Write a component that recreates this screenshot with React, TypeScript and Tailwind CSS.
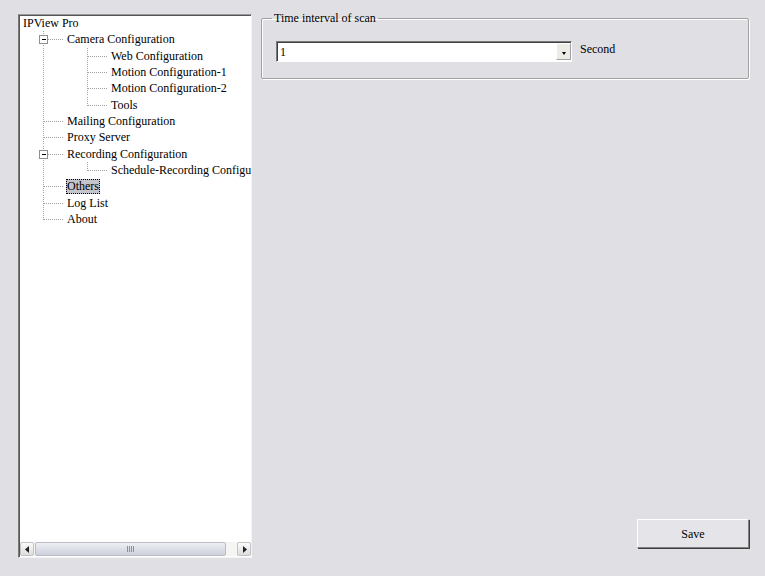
import React from "react";

type Guide = "pipe" | "tee" | "elbow";

interface Node {
  label: string;
  guides: Guide[];
  expander?: boolean;
  selected?: boolean;
}

const nodes: Node[] = [
  { label: "IPView Pro", guides: [] },
  { label: "Camera Configuration", guides: ["tee"], expander: true },
  { label: "Web Configuration", guides: ["pipe", "tee"] },
  { label: "Motion Configuration-1", guides: ["pipe", "tee"] },
  { label: "Motion Configuration-2", guides: ["pipe", "tee"] },
  { label: "Tools", guides: ["pipe", "elbow"] },
  { label: "Mailing Configuration", guides: ["tee"] },
  { label: "Proxy Server", guides: ["tee"] },
  { label: "Recording Configuration", guides: ["tee"], expander: true },
  { label: "Schedule-Recording Configuration", guides: ["pipe", "elbow"] },
  { label: "Others", guides: ["tee"], selected: true },
  { label: "Log List", guides: ["tee"] },
  { label: "About", guides: ["elbow"] },
];

const dot = { stroke: "#a0a0a0", strokeWidth: 1, strokeDasharray: "1 1" };

function GuideCell({ kind, last, expander }: { kind: Guide; last: boolean; expander?: boolean }) {
  return (
    <svg width="44" height="100%" viewBox="0 0 44 16" preserveAspectRatio="none" className="shrink-0 block" shapeRendering="crispEdges">
      {kind === "pipe" && <line x1="23.5" y1="0" x2="23.5" y2="16" {...dot} />}
      {kind === "tee" && <line x1="23.5" y1="0" x2="23.5" y2="16" {...dot} />}
      {kind === "elbow" && <line x1="23.5" y1="0" x2="23.5" y2="8.5" {...dot} />}
      {last && <line x1="23.5" y1="8.5" x2="44" y2="8.5" {...dot} />}
      {expander && (
        <g>
          <rect x="19.5" y="4.5" width="8" height="8" fill="#ffffff" stroke="#8e8f8f" />
          <line x1="21.5" y1="8.5" x2="26" y2="8.5" stroke="#000000" />
        </g>
      )}
    </svg>
  );
}

function TreeRow({ node }: { node: Node }) {
  const n = node.guides.length;
  return (
    <div className="flex h-[16.33px] items-stretch whitespace-nowrap">
      {node.guides.map((g, i) => (
        <GuideCell key={i} kind={g} last={i === n - 1} expander={i === n - 1 && node.expander} />
      ))}
      <span
        className={
          "ml-[2px] flex items-center px-[1px] leading-none " +
          (node.selected ? "bg-[#c4c4cc] outline outline-1 outline-dotted outline-black -outline-offset-1 my-[1px]" : "")
        }
      >
        {node.label}
      </span>
    </div>
  );
}

function ScrollButton({ dir }: { dir: "left" | "right" }) {
  return (
    <div className="w-[14px] h-[14px] shrink-0 flex items-center justify-center border border-[#c3c3c3] bg-gradient-to-b from-[#fbfbfb] to-[#dcdcdc] rounded-[2px]">
      <svg width="5" height="7" viewBox="0 0 5 7">
        {dir === "left" ? <path d="M4 0 L0 3.5 L4 7 Z" fill="#222" /> : <path d="M1 0 L5 3.5 L1 7 Z" fill="#222" />}
      </svg>
    </div>
  );
}

export default function App() {
  return (
    <div
      className="w-[765px] h-[576px] bg-[#e0dfe3] flex items-start text-[12px] text-black overflow-hidden font-['Liberation_Serif',serif]"
      style={{ fontFamily: '"Liberation Serif", "Times New Roman", serif' }}
    >
      {/* tree view */}
      <div className="mt-[14px] ml-[18px] w-[234px] h-[544px] flex flex-col bg-white border-t border-l border-t-[#9a9a9a] border-l-[#7a7a7a] border-r border-b border-r-[#f4f4f4] border-b-[#f4f4f4] shadow-[inset_1px_1px_0_#555]">
        <div className="flex-1 overflow-hidden pl-[1px]">
          {nodes.map((n) => (
            <TreeRow key={n.label} node={n} />
          ))}
        </div>
        <div className="h-[14px] mb-[1px] ml-[1px] flex items-stretch bg-[#f5f5f3]">
          <ScrollButton dir="left" />
          <div className="ml-[1px] w-[191px] rounded-[2px] border border-[#b9bcc6] bg-gradient-to-b from-[#f0f1f5] via-[#dcdfe8] to-[#cfd2dc] flex items-center justify-center gap-[1px]">
            <div className="w-px h-[6px] bg-[#8b8f9c]" />
            <div className="w-px h-[6px] bg-[#8b8f9c]" />
            <div className="w-px h-[6px] bg-[#8b8f9c]" />
            <div className="w-px h-[6px] bg-[#8b8f9c]" />
          </div>
          <div className="flex-1" />
          <ScrollButton dir="right" />
        </div>
      </div>

      {/* settings */}
      <div className="mt-[11px] ml-[9px] w-[488px] h-[537px] flex flex-col">
        <fieldset className="h-[68px] border border-[#a0a0a0] shadow-[inset_1px_1px_0_#ffffff,1px_1px_0_#ffffff] rounded-[2px] px-0 pt-[16px] m-0">
          <legend className="ml-[10px] px-[2px] leading-[14px]">Time interval of scan</legend>
          <div className="flex items-start px-[14px]">
            <div className="w-[296px] h-[21px] flex bg-white border border-t-[#7a7a7a] border-l-[#7a7a7a] border-r-[#ffffff] border-b-[#ffffff] shadow-[inset_1px_1px_0_#404040]">
              <span className="flex-1 pl-[3px] pt-[3px] leading-[14px]">1</span>
              <div className="w-[15px] mt-[1px] mb-[1px] bg-[#ecebe6] border border-t-[#ffffff] border-l-[#ffffff] border-r-[#a0a0a0] border-b-[#a0a0a0] flex items-end justify-center pb-[4px]">
                <svg width="4" height="3" viewBox="0 0 4 3">
                  <path d="M0 0 H4 L2 3 Z" fill="#000" />
                </svg>
              </div>
            </div>
            <span className="ml-[8px] mt-[1px] leading-[14px]">Second</span>
          </div>
        </fieldset>

        <button className="mt-auto self-end w-[112px] h-[29px] bg-[#e5e4e8] border border-t-[#ffffff] border-l-[#ffffff] border-r-[#808080] border-b-[#808080] shadow-[1px_1px_0_#404040] text-[12px] leading-none">
          Save
        </button>
      </div>
    </div>
  );
}
